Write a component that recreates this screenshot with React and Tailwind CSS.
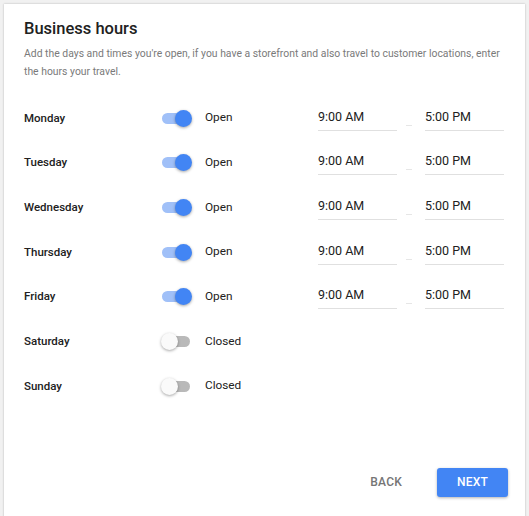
const days = [
  { name: "Monday", open: true },
  { name: "Tuesday", open: true },
  { name: "Wednesday", open: true },
  { name: "Thursday", open: true },
  { name: "Friday", open: true },
  { name: "Saturday", open: false },
  { name: "Sunday", open: false },
];

const Toggle = ({ on }) => (
  <div className="relative w-[31px] h-[17px] flex items-center">
    <div
      className={`ml-[1px] w-[28px] h-[11px] rounded-full ${
        on ? "bg-[#a0c0f8]" : "bg-[#b9b9b9]"
      }`}
    />
    <div
      className={`absolute top-0 w-[17px] h-[17px] rounded-full shadow-[0_1px_3px_rgba(0,0,0,0.35)] ${
        on ? "left-[14px] bg-[#4285f4]" : "left-0 bg-[#fafafa]"
      }`}
    />
  </div>
);

const TimeField = ({ value }) => (
  <div className="w-[79px] h-[25px] border-b border-[#e0e0e0] text-[12.5px] text-[#212121] leading-[22px]">
    {value}
  </div>
);

export default function App() {
  return (
    <div
      className="min-h-[516px] bg-[#f1f1f1] pt-[4px] pl-[4px] pr-[4px]"
      style={{ fontFamily: "Roboto, 'Liberation Sans', sans-serif" }}
    >
      <div className="bg-white h-[520px] shadow-[0_0_2px_rgba(0,0,0,0.25)] pl-[20px] pr-[17px] pt-[13px]">
        <h1 className="text-[16.5px] leading-[24px] font-medium text-[#212121]">
          Business hours
        </h1>
        <p className="mt-[4px] text-[10.4px] leading-[18px] text-[#7a7a7a]">
          Add the days and times you're open, if you have a storefront and also
          travel to customer locations, enter the hours your travel.
        </p>

        <div className="mt-[15px]">
          {days.map((d) => (
            <div key={d.name} className="h-[44.67px] flex items-center">
              <div className="w-[137px] text-[11.5px] font-medium text-[#212121]">
                {d.name}
              </div>
              <Toggle on={d.open} />
              <div className="ml-[13px] w-[113px] text-[11.8px] text-[#212121]">
                {d.open ? "Open" : "Closed"}
              </div>
              {d.open && (
                <div className="flex items-center">
                  <TimeField value="9:00 AM" />
                  <div className="ml-[9px] mr-[13px] mt-[14px] w-[6px] h-px bg-[#e6e6e6]" />
                  <TimeField value="5:00 PM" />
                </div>
              )}
            </div>
          ))}
        </div>

        <div className="mt-[59px] flex justify-end items-center">
          <button className="mr-[20px] px-[15px] h-[29px] text-[12px] font-medium text-[#757575] tracking-[0.2px]">
            BACK
          </button>
          <button className="w-[71px] h-[29px] rounded-[3px] bg-[#4285f4] text-white text-[12px] font-medium tracking-[0.2px] shadow-[0_1px_3px_rgba(0,0,0,0.3)]">
            NEXT
          </button>
        </div>
      </div>
    </div>
  );
}
